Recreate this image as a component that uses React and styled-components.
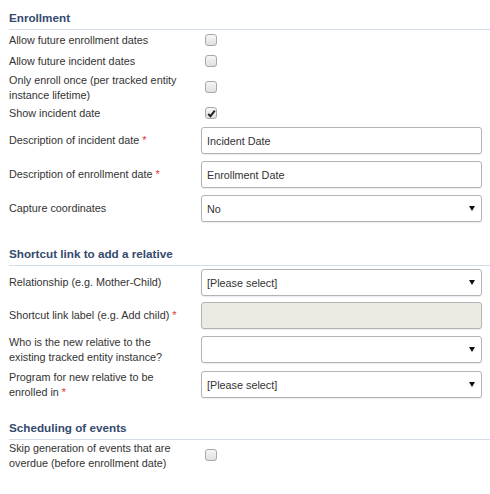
import React from "react";
import styled, { createGlobalStyle } from "styled-components";

const GlobalStyle = createGlobalStyle`
  html, body { margin: 0; padding: 0; background: #ffffff; }
  body { font-family: "Liberation Sans", Arial, sans-serif; color: #333333; }
  * { box-sizing: border-box; }
`;

const Page = styled.div`
  width: 490px;
  padding: 10px 0 0 9px;
`;

const Section = styled.section`
  margin-top: ${(p) => p.$gap || 0}px;
`;

const SectionTitle = styled.h3`
  margin: 0;
  font-size: 11.7px;
  font-weight: bold;
  line-height: 16px;
  color: #354a6e;
  padding-bottom: 3px;
  border-bottom: 1px solid #d3dce7;
`;

const Row = styled.div`
  display: grid;
  grid-template-columns: 192px 281px;
  align-items: center;
  padding: ${(p) => (p.$field ? (p.$roomy ? "3px 0 4px" : "3px 0") : "1px 0")};
`;

const Label = styled.div`
  font-size: 10.8px;
  line-height: 14.5px;
  color: #333333;
  padding-right: 14px;
`;

const Required = styled.span`
  color: #e2302a;
  margin-left: 3px;
`;

const CheckBox = styled.span`
  display: flex;
  align-items: center;
  justify-content: center;
  width: 12px;
  height: 12px;
  margin: 3px 0 4px 4px;
  border: 1px solid #a8a8a8;
  border-radius: 3px;
  background: linear-gradient(#f6f6f6, #e0e0e0);
`;

const TextInput = styled.div`
  height: 27px;
  border: 1px solid #b3b3b3;
  border-radius: 3px;
  box-shadow: 0 1px 1px rgba(0, 0, 0, 0.08);
  background: ${(p) => (p.$disabled ? "#ebebe4" : "#ffffff")};
  display: flex;
  align-items: center;
  padding: 0 5px;
  font-size: 10.8px;
  color: #333333;
`;

const SelectBox = styled(TextInput)`
  justify-content: space-between;
`;

const Arrow = styled.span`
  width: 0;
  height: 0;
  border-left: 3px solid transparent;
  border-right: 3px solid transparent;
  border-top: 5px solid #111111;
  margin-right: 1px;
`;

const Check = ({ checked }) => (
  <CheckBox>
    {checked && (
      <svg width="9" height="9" viewBox="0 0 9 9">
        <path d="M1.2 4.8 L3.4 7.2 L7.8 1.6" fill="none" stroke="#222" strokeWidth="1.9" />
      </svg>
    )}
  </CheckBox>
);

const CheckRow = ({ label, checked }) => (
  <Row>
    <Label>{label}</Label>
    <div>
      <Check checked={checked} />
    </div>
  </Row>
);

const FieldLabel = ({ label, required }) => (
  <Label>
    {label}
    {required && <Required>*</Required>}
  </Label>
);

const InputRow = ({ label, required, value, disabled, roomy }) => (
  <Row $field $roomy={roomy}>
    <FieldLabel label={label} required={required} />
    <TextInput $disabled={disabled}>{value}</TextInput>
  </Row>
);

const SelectRow = ({ label, required, value, roomy }) => (
  <Row $field $roomy={roomy}>
    <FieldLabel label={label} required={required} />
    <SelectBox>
      <span>{value}</span>
      <Arrow />
    </SelectBox>
  </Row>
);

export default function App() {
  return (
    <>
      <GlobalStyle />
      <Page>
        <Section>
          <SectionTitle>Enrollment</SectionTitle>
          <CheckRow label="Allow future enrollment dates" />
          <CheckRow label="Allow future incident dates" />
          <CheckRow label="Only enroll once (per tracked entity instance lifetime)" />
          <CheckRow label="Show incident date" checked />
          <InputRow roomy label="Description of incident date" required value="Incident Date" />
          <InputRow roomy label="Description of enrollment date" required value="Enrollment Date" />
          <SelectRow roomy label="Capture coordinates" value="No" />
        </Section>
        <Section $gap={20}>
          <SectionTitle>Shortcut link to add a relative</SectionTitle>
          <SelectRow label="Relationship (e.g. Mother-Child)" value="[Please select]" />
          <InputRow label="Shortcut link label (e.g. Add child)" required disabled value="" />
          <SelectRow label="Who is the new relative to the existing tracked entity instance?" value="" />
          <SelectRow label="Program for new relative to be enrolled in" required value="[Please select]" />
        </Section>
        <Section $gap={18}>
          <SectionTitle>Scheduling of events</SectionTitle>
          <CheckRow label="Skip generation of events that are overdue (before enrollment date)" />
        </Section>
      </Page>
    </>
  );
}
